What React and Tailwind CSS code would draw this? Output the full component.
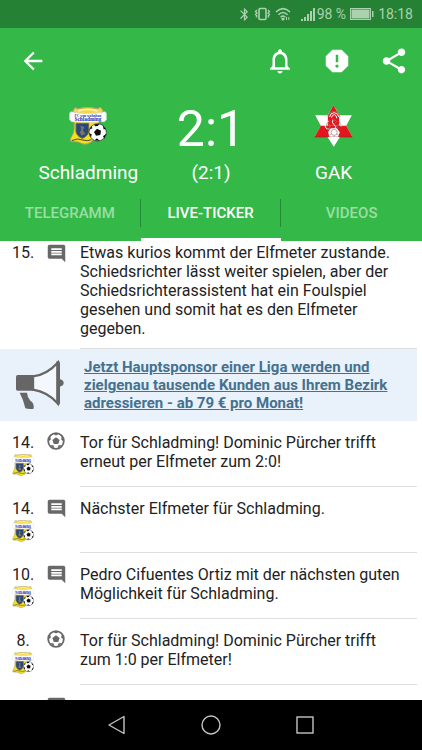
import React, { useState } from 'react';
import {
    MdArrowBack,
    MdBluetooth,
    MdComment,
    MdNotificationsNone,
    MdReport,
    MdShare,
} from 'react-icons/md';

const tabs = ['TELEGRAMM', 'LIVE-TICKER', 'VIDEOS'];

const entries = [
    { id: 1, minute: '14.', type: 'goal', text: 'Tor für Schladming! Dominic Pürcher trifft erneut per Elfmeter zum 2:0!' },
    { id: 2, minute: '14.', type: 'comment', text: 'Nächster Elfmeter für Schladming.' },
    { id: 3, minute: '10.', type: 'comment', text: 'Pedro Cifuentes Ortiz mit der nächsten guten Möglichkeit für Schladming.' },
    { id: 4, minute: '8.', type: 'goal', text: 'Tor für Schladming! Dominic Pürcher trifft zum 1:0 per Elfmeter!' },
    { id: 5, minute: '', type: 'comment', text: '' },
];

function SchladmingCrest({ className }) {
    return (
        <svg viewBox="0 0 114 114" className={className} role="img" aria-label="FC Schladming">
            <path d="M15 40 H90 L86 66 Q82 92 68 104 Q54 114 42 111 Q26 101 6 104 Q1 99 9 86 Q18 76 15 40Z" fill="#f6e01a" stroke="#a9a06a" strokeWidth="3" />
            <path d="M8 101 Q24 92 42 99 Q54 104 68 98" fill="none" stroke="#4c4a3a" strokeWidth="3" />
            <path d="M18 2 Q26 8 34 4 Q56 -2 78 4 Q88 8 94 1 L102 11 L94 24 H20 L12 12Z" fill="#f3da45" stroke="#b5a778" strokeWidth="3" />
            <path d="M28 12 Q57 4 86 12" fill="none" stroke="#fff3b0" strokeWidth="4" />
            <path d="M2 19 Q4 11 16 17 Q57 23 98 17 Q110 11 112 19 V38 Q108 47 96 44 Q57 48 18 44 Q6 47 2 38Z" fill="#fff" stroke="#d5dbe4" strokeWidth="2" />
            <text x="57" y="29" textAnchor="middle" fontSize="11" fontWeight="bold" fontFamily="Liberation Serif, serif" fill="#2a35b5">FC wm wohnbau</text>
            <text x="57" y="43" textAnchor="middle" fontSize="16" fontWeight="bold" fontFamily="Liberation Serif, serif" fill="#1b26ad">Schladming</text>
            <path d="M21 49 H59 V74 Q56 88 40 94 Q24 88 21 74Z" fill="#2c4680" stroke="#6d6a4c" strokeWidth="3" />
            <path d="M34 56 L46 60 L42 70 L49 80 L38 86 L32 76 L37 68Z" fill="#77785f" />
            <circle cx="86" cy="76" r="26" fill="#fff" stroke="#222" strokeWidth="2" />
            <path d="M84 65 L96 71 L94 84 L81 86 L75 75Z" fill="#0c0c0c" />
            <path d="M76 52 L91 51 L86 57 L78 58Z M101 55 L111 67 L104 67Z M112 80 L106 95 L102 88Z M92 101 L77 100 L84 94Z M66 92 L60 78 L68 82Z M61 68 L68 56 L70 64Z" fill="#0c0c0c" />
        </svg>
    );
}

function GakCrest({ className }) {
    return (
        <svg viewBox="0 0 116 126" className={className} role="img" aria-label="GAK">
            <path d="M58 1 L76 31 H113 L96 62 L115 96 H77 L59 125 L40 96 H1 L20 62 L3 31 H40Z" fill="#fff" />
            <path d="M58 1 L75 31 V62 H41 V31Z" fill="#e3151d" />
            <path d="M20 62 H96 L115 96 H1Z" fill="#e3151d" />
            <path d="M1 96 H40 M77 96 H115" stroke="#8e2a1c" strokeWidth="2" />
            <path d="M42 80 L50 70 H68 L77 82 L72 95 H45Z" fill="#fff" />
            <g fill="none" stroke="#fff" strokeWidth="3">
                <path d="M46 36 Q48 24 60 23 Q72 24 74 36" />
                <path d="M52 38 Q54 29 61 29 Q67 30 68 40" />
                <path d="M44 48 Q32 54 33 66 Q36 74 46 72" />
                <path d="M56 44 Q52 54 60 60 Q68 64 62 72" />
                <path d="M76 46 Q84 52 82 64" />
            </g>
            <g fill="none" stroke="#8c8784" strokeWidth="2">
                <path d="M43 34 Q44 20 60 20 Q76 20 77 36" />
                <path d="M49 46 Q36 52 36 64 Q40 78 48 66 L44 54" />
                <path d="M52 50 Q62 40 68 50 L60 58 L72 70" />
                <path d="M74 48 L82 62 M72 58 L80 66" />
                <circle cx="60" cy="82" r="9" />
                <path d="M46 90 L52 86 M74 90 L68 86 M60 91 V96" />
            </g>
        </svg>
    );
}

function BallIcon() {
    return (
        <svg viewBox="0 0 18 18" className="size-[18px]" role="img" aria-label="Tor">
            <circle cx="9" cy="9" r="7.8" fill="none" stroke="#686868" strokeWidth="1.8" />
            <path d="M9 5.2 L12.6 7.9 L11.2 12.1 H6.8 L5.4 7.9Z" fill="#686868" />
            <path d="M5.6 1.6 L9 3.6 L12.4 1.6Z M15 4 L14.1 7.6 L17.2 9.8Z M15 13 L11.6 13.3 L10.4 16.8Z M3 13 L6.4 13.3 L7.6 16.8Z M3 4 L3.9 7.6 L0.8 9.8Z" fill="#686868" />
        </svg>
    );
}

function Megaphone() {
    return (
        <svg viewBox="0 0 150 150" className="size-[50px]" aria-hidden="true">
            <path d="M8 45 H56 V92 H8 Q3 92 3 87 V50 Q3 45 8 45Z" fill="#666" />
            <path d="M54 49 Q96 44 128 8 V130 Q98 96 54 89Z" fill="#f4f8fd" stroke="#666" strokeWidth="7" />
            <path d="M124 7 Q124 3 129 3 Q135 3 135 8 V130 Q135 135 130 135 Q124 134 124 128Z" fill="#666" />
            <path d="M134 57 Q146 60 146 69 Q146 77 134 80Z" fill="#666" />
            <path d="M14 98 H36 Q37 112 46 122 Q58 128 56 146 Q43 149 31 145 Q26 120 14 98Z" fill="#666" />
        </svg>
    );
}

function StatusBar() {
    return (
        <div className="flex h-7 shrink-0 items-center justify-end bg-[#258133] pr-[9px] text-sm text-[#abd2af]">
            <MdBluetooth className="size-[15px]" />
            <svg viewBox="0 0 17 14" className="ml-0.5 h-3.5 w-[17px]" fill="none" stroke="currentColor" aria-hidden="true">
                <rect x="5" y="1.5" width="7" height="11" rx="1" strokeWidth="1.6" />
                <path d="M3 3 L1.5 4.5 L3 6 L1.5 7.5 L3 9 L2 10.5 M14 3 L15.5 4.5 L14 6 L15.5 7.5 L14 9 L15 10.5" strokeWidth="1.3" />
            </svg>
            <svg viewBox="0 0 16 14" className="ml-1 h-3.5 w-4" fill="none" stroke="currentColor" strokeWidth="1.6" aria-hidden="true">
                <path d="M1 5 Q8 -1.6 15 5 M3.4 7.8 Q8 3.2 12.6 7.8 M5.6 10.2 Q8 7.8 10.4 10.2" />
                <circle cx="8" cy="12" r="0.8" fill="currentColor" />
                <path d="M11.5 10 V13 M13.8 10 V13" strokeWidth="1" />
            </svg>
            <svg viewBox="0 0 14 13" className="ml-2.5 h-[13px] w-3.5" fill="currentColor" aria-hidden="true">
                <path d="M0 11 H2 V13 H0Z M3 9 H5 V13 H3Z M6 6 H8 V13 H6Z M9 3 H11 V13 H9Z M12 0 H14 V13 H12Z" />
            </svg>
            <span className="ml-0.5">98 %</span>
            <svg viewBox="0 0 24 12" className="ml-1 h-3 w-6" aria-hidden="true">
                <rect x="0.5" y="0.5" width="20" height="11" fill="none" stroke="currentColor" />
                <rect x="1.5" y="1.5" width="18" height="9" fill="currentColor" />
                <rect x="22" y="3" width="1.5" height="6" fill="currentColor" />
            </svg>
            <span className="ml-1">18:18</span>
        </div>
    );
}

function TickerEntry({ minute, type, text }) {
    return (
        <li className="flex min-h-[66px]">
            <div className="flex w-[46px] shrink-0 flex-col items-center gap-0.5 pt-3">
                <span>{minute}</span>
                {minute && <SchladmingCrest className="size-[22px]" />}
            </div>
            <div className="flex w-5 shrink-0 justify-center pt-[11px] text-[#686868]">
                {type === 'goal' ? <BallIcon /> : <MdComment className="size-[21px] shrink-0" />}
            </div>
            <p className="ml-3.5 flex-1 border-b border-[#dedede] pt-3 pr-2.5 pb-2">{text}</p>
        </li>
    );
}

export default function App() {
    const [activeTab, setActiveTab] = useState('LIVE-TICKER');

    return (
        <div className="flex h-screen flex-col overflow-hidden bg-white font-[Roboto,sans-serif]">
            <StatusBar />

            <header className="shrink-0 bg-[#34b848] text-white">
                <div className="flex h-[66px] items-center justify-between pr-[13px] pl-[19px]">
                    <button aria-label="Zurück">
                        <MdArrowBack className="size-7" />
                    </button>
                    <div className="flex gap-[27px]">
                        <button aria-label="Benachrichtigungen">
                            <MdNotificationsNone className="size-[30px]" />
                        </button>
                        <button aria-label="Melden">
                            <MdReport className="size-[30px]" />
                        </button>
                        <button aria-label="Teilen">
                            <MdShare className="size-[30px]" />
                        </button>
                    </div>
                </div>

                <div className="grid h-[94px] grid-cols-3 px-[27px] text-center text-[19px] leading-6">
                    <div className="flex flex-col items-center">
                        <div className="flex h-[67px] items-center pb-1">
                            <SchladmingCrest className="size-[38px]" />
                        </div>
                        <span>Schladming</span>
                    </div>
                    <div className="flex flex-col items-center">
                        <span className="h-[67px] text-[50px] leading-[70px]">2:1</span>
                        <span>(2:1)</span>
                    </div>
                    <div className="flex flex-col items-center">
                        <div className="flex h-[67px] items-center pb-1">
                            <GakCrest className="h-[42px] w-[39px]" />
                        </div>
                        <span>GAK</span>
                    </div>
                </div>

                <nav className="grid h-[53px] grid-cols-3" role="tablist">
                    {tabs.map((tab) => (
                        <button
                            key={tab}
                            role="tab"
                            aria-selected={tab === activeTab}
                            onClick={() => setActiveTab(tab)}
                            className={`flex flex-col justify-between pt-[11px] text-[15px] font-medium ${
                                tab === activeTab ? 'text-white' : 'text-[#99dfa3]'
                            }`}
                        >
                            <span className={`h-7 w-full leading-7 ${tab !== 'VIDEOS' ? 'border-r border-[#248a35]' : ''}`}>{tab}</span>
                            <span className={`h-[3px] w-full ${tab === activeTab ? 'bg-white' : ''}`} />
                        </button>
                    ))}
                </nav>
            </header>

            <main className="min-h-0 flex-1 overflow-y-auto pr-[5px] text-base leading-[19px] text-[#222] [scrollbar-width:none]">
                <div className="flex pt-0.5">
                    <span className="w-[46px] shrink-0 text-center">15.</span>
                    <div className="flex w-5 shrink-0 justify-center text-[#686868]">
                        <MdComment className="size-[21px] shrink-0" />
                    </div>
                    <p className="ml-3.5 flex-1 border-b border-[#dedede] pr-2.5 pb-2.5">
                        Etwas kurios kommt der Elfmeter zustande. Schiedsrichter lässt weiter spielen, aber der Schiedsrichterassistent hat ein Foulspiel gesehen und somit hat es den Elfmeter gegeben.
                    </p>
                </div>

                <a href="#sponsor" className="flex h-[72px] items-center bg-[#e9f1fa] pl-[15px]">
                    <Megaphone />
                    <span className="ml-[19px] flex-1 text-[15px] leading-[18px] font-bold text-[#44718f] underline">
                        Jetzt Hauptsponsor einer Liga werden und zielgenau tausende Kunden aus Ihrem Bezirk adressieren - ab 79 € pro Monat!
                    </span>
                </a>

                <ul>
                    {entries.map((entry) => (
                        <TickerEntry key={entry.id} {...entry} />
                    ))}
                </ul>
            </main>

            <div className="flex h-[50px] shrink-0 items-center justify-center gap-[74px] bg-black text-[#c4c4c4]">
                <button aria-label="Zurück">
                    <svg viewBox="0 0 20 20" className="size-5" fill="none" stroke="currentColor" strokeWidth="1.4" strokeLinejoin="round">
                        <path d="M17 1.5 V18.5 L2 10Z" />
                    </svg>
                </button>
                <button aria-label="Startseite">
                    <svg viewBox="0 0 20 20" className="size-5" fill="none" stroke="currentColor" strokeWidth="1.4">
                        <circle cx="10" cy="10" r="9" />
                    </svg>
                </button>
                <button aria-label="Letzte Apps">
                    <svg viewBox="0 0 20 20" className="size-5" fill="none" stroke="currentColor" strokeWidth="1.4">
                        <rect x="2" y="2" width="16" height="16" />
                    </svg>
                </button>
            </div>
        </div>
    );
}
